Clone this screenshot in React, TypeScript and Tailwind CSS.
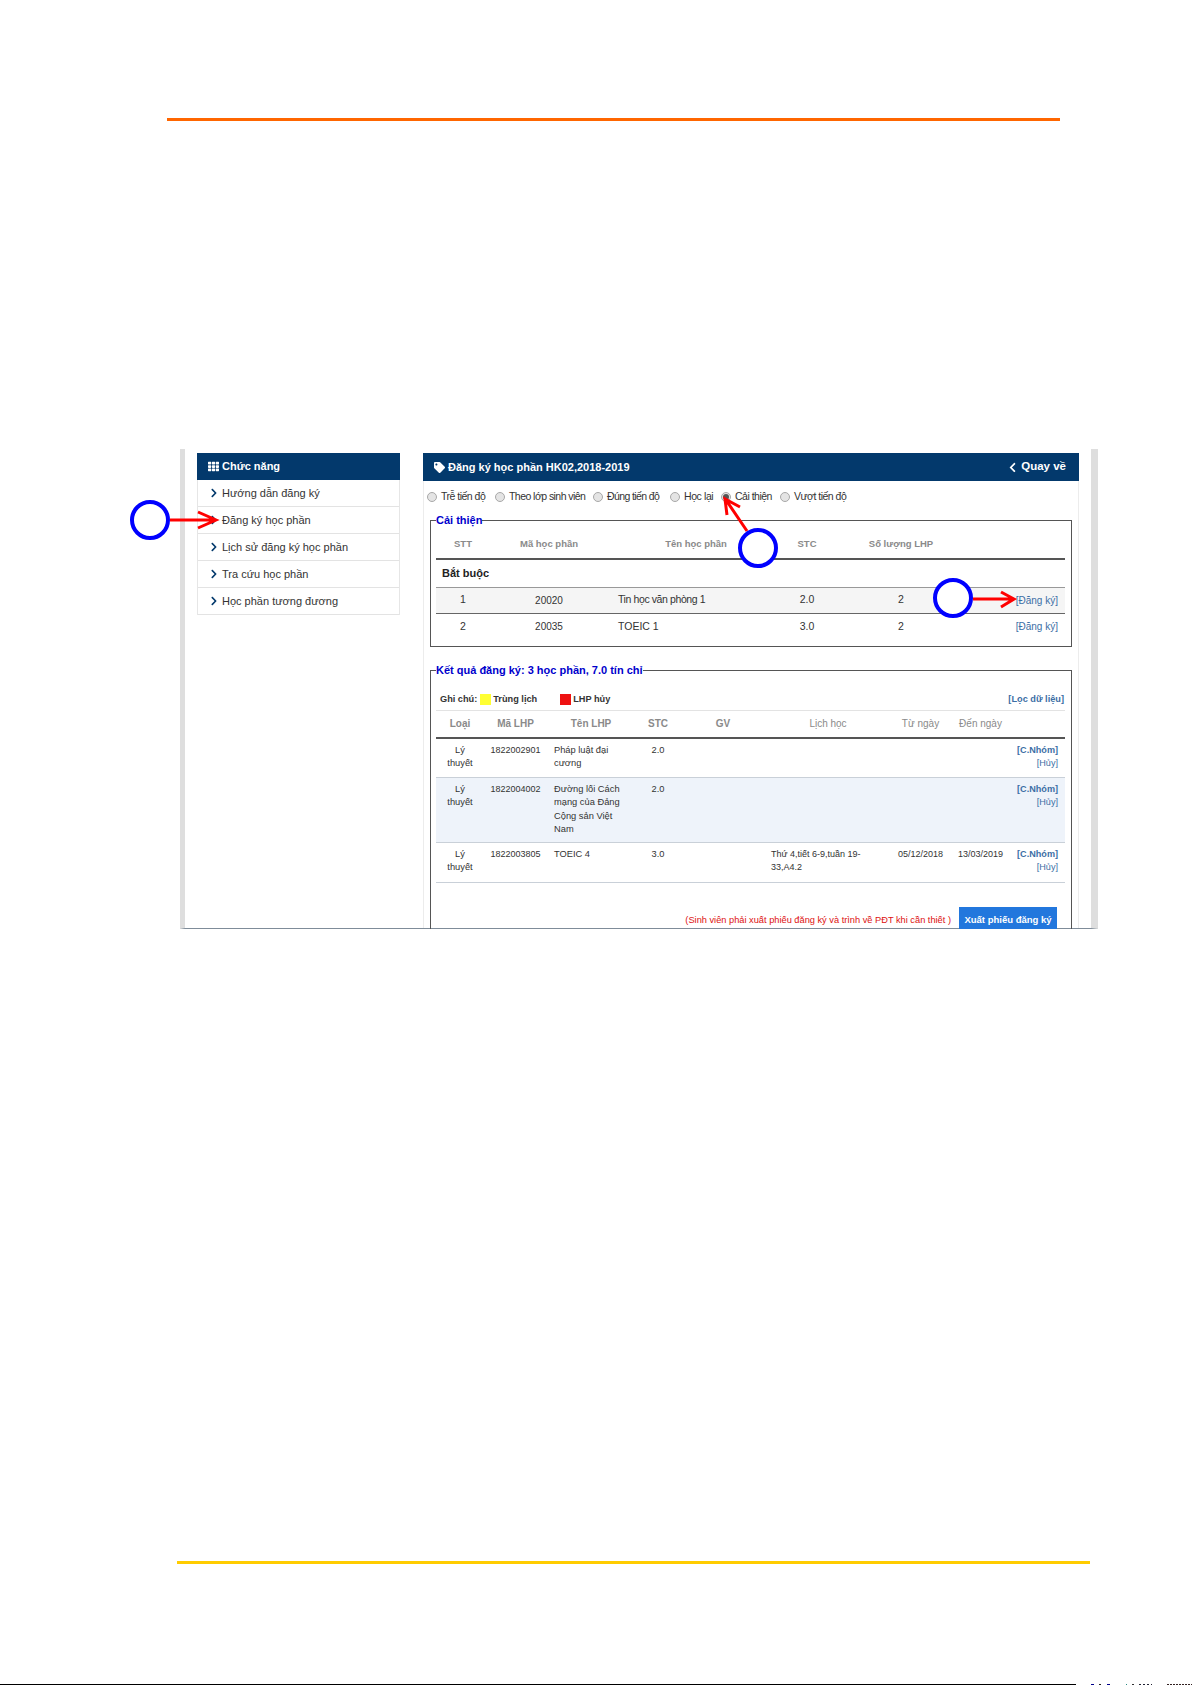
import { FaChevronLeft, FaChevronRight, FaTag, FaTh } from 'react-icons/fa';

const MENU = [
  'Hướng dẫn đăng ký',
  'Đăng ký học phần',
  'Lịch sử đăng ký học phần',
  'Tra cứu học phần',
  'Học phần tương đương',
];

const TRACKS = [
  { label: 'Trễ tiến độ', checked: false, style: 'w-[68px] tracking-[-0.5px]' },
  { label: 'Theo lớp sinh viên', checked: false, style: 'w-[98px] tracking-[-0.55px]' },
  { label: 'Đúng tiến độ', checked: false, style: 'w-[77px] tracking-[-0.6px]' },
  { label: 'Học lại', checked: false, style: 'w-[51px] tracking-[-0.4px]' },
  { label: 'Cải thiện', checked: true, style: 'w-[59px] tracking-[-0.5px]' },
  { label: 'Vượt tiến độ', checked: false, style: 'tracking-[-0.5px]' },
];

const RESULTS = [
  {
    name: 'Pháp luật đại cương',
    code: '1822002901',
    stc: '2.0',
    schedule: '',
    from: '',
    to: '',
    row: 'h-[40px]',
  },
  {
    name: 'Đường lối Cách mạng của Đảng Cộng sản Việt Nam',
    code: '1822004002',
    stc: '2.0',
    schedule: '',
    from: '',
    to: '',
    row: 'h-[65px] bg-[#eef3fa]',
  },
  {
    name: 'TOEIC 4',
    code: '1822003805',
    stc: '3.0',
    schedule: 'Thứ 4,tiết 6-9,tuần 19-33,A4.2',
    from: '05/12/2018',
    to: '13/03/2019',
    row: 'h-[40px]',
  },
];

function Radio({ checked }: { checked: boolean }) {
  return (
    <span className="mr-[4px] flex size-[10px] shrink-0 items-center justify-center rounded-full border border-[#a8a8a8] bg-[#e4e4e4]">
      {checked && <span className="size-[6px] rounded-full bg-[#555]" />}
    </span>
  );
}

function Sidebar() {
  return (
    <aside className="w-[203px] shrink-0">
      <div className="flex h-[27px] items-center gap-[3px] bg-[#03396c] pl-[11px] text-[11px] font-bold text-white">
        <FaTh className="size-[11px]" />
        Chức năng
      </div>
      <ul className="border-x border-[#e6e6e6] text-[#333]">
        {MENU.map((item) => (
          <li
            key={item}
            className="flex h-[27px] items-center gap-[3px] border-b border-[#e3e3e3] pl-[11px] text-[11px]"
          >
            <FaChevronRight className="size-[10px] text-[#03396c]" />
            {item}
          </li>
        ))}
      </ul>
    </aside>
  );
}

function CourseTable() {
  return (
    <table className="mt-[4px] w-[629px] table-fixed border-collapse text-[10.5px] text-[#333]">
      <colgroup>
        <col className="w-[54px]" />
        <col className="w-[118px]" />
        <col className="w-[176px]" />
        <col className="w-[46px]" />
        <col className="w-[142px]" />
        <col className="w-[93px]" />
      </colgroup>
      <thead>
        <tr className="h-[28px] border-b-2 border-[#555] text-center text-[9.5px] font-bold text-[#8a8a8a]">
          <th>STT</th>
          <th>Mã học phần</th>
          <th>Tên học phần</th>
          <th>STC</th>
          <th>Số lượng LHP</th>
          <th />
        </tr>
      </thead>
      <tbody>
        <tr className="h-[28px] border-b border-[#999]">
          <td colSpan={6} className="pl-[6px] text-[11px] font-bold text-[#222]">
            Bắt buộc
          </td>
        </tr>
        <tr className="h-[26px] border-b border-[#666] bg-[#f5f5f5] text-center">
          <td>1</td>
          <td className="text-[10px]">20020</td>
          <td className="pl-[10px] text-left tracking-[-0.4px]">Tin học văn phòng 1</td>
          <td>2.0</td>
          <td>2</td>
          <td className="pr-[7px] text-right text-[10px] text-[#3c6ea5]">[Đăng ký]</td>
        </tr>
        <tr className="h-[27px] text-center">
          <td>2</td>
          <td className="text-[10px]">20035</td>
          <td className="pl-[10px] text-left">TOEIC 1</td>
          <td>3.0</td>
          <td>2</td>
          <td className="pr-[7px] text-right text-[10px] text-[#3c6ea5]">[Đăng ký]</td>
        </tr>
      </tbody>
    </table>
  );
}

function ResultTable() {
  return (
    <table className="w-[629px] table-fixed border-collapse text-[9.3px] leading-[13.3px] text-[#333]">
      <colgroup>
        <col className="w-[48px]" />
        <col className="w-[63px]" />
        <col className="w-[88px]" />
        <col className="w-[46px]" />
        <col className="w-[84px]" />
        <col className="w-[126px]" />
        <col className="w-[59px]" />
        <col className="w-[61px]" />
        <col className="w-[54px]" />
      </colgroup>
      <thead>
        <tr className="h-[27px] border-y border-t-[#e3e3e3] border-b-2 border-b-[#555] text-center text-[10px] font-bold text-[#8a8a8a]">
          <th>Loại</th>
          <th>Mã LHP</th>
          <th>Tên LHP</th>
          <th>STC</th>
          <th>GV</th>
          <th className="font-normal">Lịch học</th>
          <th className="font-normal">Từ ngày</th>
          <th className="font-normal">Đến ngày</th>
          <th />
        </tr>
      </thead>
      <tbody>
        {RESULTS.map((r) => (
          <tr key={r.code} className={`${r.row} border-b border-[#c9d0d8] align-top`}>
            <td className="px-[8px] pt-[5px] text-center">Lý thuyết</td>
            <td className="pt-[5px] text-center text-[9px]">{r.code}</td>
            <td className="pr-[8px] pl-[7px] pt-[5px]">{r.name}</td>
            <td className="pt-[5px] text-center">{r.stc}</td>
            <td />
            <td className="pr-[20px] pl-[6px] pt-[5px] text-[9px]">{r.schedule}</td>
            <td className="pt-[5px] text-center text-[9px]">{r.from}</td>
            <td className="pt-[5px] text-center text-[9px]">{r.to}</td>
            <td className="pr-[7px] pt-[5px] text-right text-[9.1px] text-[#3c6ea5]">
              <div className="font-bold">[C.Nhóm]</div>
              <div>[Hủy]</div>
            </td>
          </tr>
        ))}
      </tbody>
    </table>
  );
}

function MainPanel() {
  return (
    <main className="h-[475px] w-[656px] shrink-0">
      <div className="flex h-[28px] items-center justify-between bg-[#03396c] pr-[13px] pl-[11px] text-[11px] font-bold text-white">
        <span className="flex items-center gap-[3px]">
          <FaTag className="size-[11px]" />
          Đăng ký học phần HK02,2018-2019
        </span>
        <span className="flex items-center gap-[3px] text-[11.5px]">
          <FaChevronLeft className="size-[11px]" />
          Quay về
        </span>
      </div>

      <div className="h-[447px] border-x border-[#ececec]">
        <div className="flex h-[32px] items-center pl-[3px] text-[10.5px] text-[#333]">
          {TRACKS.map((t) => (
            <label key={t.label} className={`flex items-center whitespace-nowrap ${t.style}`}>
              <Radio checked={t.checked} />
              {t.label}
            </label>
          ))}
        </div>

        <fieldset className="mx-[6px] mt-[1px] h-[133px] border border-[#555] pr-[6px] pl-[5px]">
          <legend className="text-[11px] leading-[13px] font-bold text-[#0000cc]">Cải thiện</legend>
          <CourseTable />
        </fieldset>

        <fieldset className="mx-[6px] mt-[17px] h-[265px] overflow-hidden border border-b-0 border-[#555] pr-[6px] pl-[5px]">
          <legend className="text-[11px] leading-[13px] font-bold text-[#0000cc]">
            Kết quả đăng ký: 3 học phần, 7.0 tín chỉ
          </legend>
          <div className="flex h-[33px] items-end justify-between pr-[1px] pb-[5px] pl-[4px] text-[9.2px] leading-[12px] font-bold text-[#333]">
            <span className="flex items-center">
              Ghi chú:
              <span className="mr-[2px] ml-[3px] size-[11px] bg-[#ffff33]" />
              Trùng lịch
              <span className="mr-[2px] ml-[23px] size-[11px] bg-[#ee1111]" />
              LHP hủy
            </span>
            <span className="text-[#3c6ea5]">[Lọc dữ liệu]</span>
          </div>
          <ResultTable />
          <div className="mt-[24px] flex items-start justify-end pr-[8px]">
            <span className="mt-[7px] mr-[8px] text-[9.25px] leading-[12px] text-[#dd1111]">
              (Sinh viên phải xuất phiếu đăng ký và trình về PĐT khi cần thiết )
            </span>
            <button
              type="button"
              className="h-[26px] w-[98px] bg-[#2277dd] text-[9.5px] font-bold whitespace-nowrap text-white"
            >
              Xuất phiếu đăng ký
            </button>
          </div>
        </fieldset>
      </div>
    </main>
  );
}

export default function App() {
  return (
    <div className="relative flex h-[1685px] w-[1192px] flex-col overflow-hidden bg-white font-['Liberation_Sans',Arial,sans-serif]">
      <div className="mt-[118px] ml-[167px] h-[3px] w-[893px] bg-[#ff6600]" />

      <section className="mt-[328px] ml-[180px] flex h-[480px] w-[918px] shrink-0 gap-[23px] border-b border-b-[#7f8c99] border-l-[5px] border-r-[7px] border-x-[#dedede] pt-[4px] pl-[12px]">
        <Sidebar />
        <MainPanel />
      </section>

      <div className="mt-[632px] ml-[177px] h-[3px] w-[913px] bg-[#ffcc00]" />

      {/* bottom edge of the scanned page */}
      <div className="mt-auto flex h-[1px] w-full">
        <div className="h-full w-[1077px] bg-black" />
        <div className="ml-[15px] h-full w-[3px] bg-[#00008b]" />
        <div className="ml-[5px] h-full w-[2px] bg-[#222]" />
        <div className="ml-[6px] h-full w-[3px] bg-[#00008b]" />
        <div className="ml-[16px] h-full w-[1px] bg-[#2a8a80]" />
        <div className="ml-[5px] h-full w-[2px] bg-[#333]" />
        <div className="ml-[5px] h-full w-[13px] bg-[repeating-linear-gradient(90deg,#223_0_2px,transparent_2px_4px)]" />
        <div className="ml-[15px] h-full w-[25px] bg-[repeating-linear-gradient(90deg,#322_0_2px,transparent_2px_3px)]" />
      </div>

      {/* annotations drawn over the screenshot */}
      <svg className="pointer-events-none absolute inset-0" width="1192" height="1685" fill="none">
        <g stroke="#ff0000" strokeWidth="3">
          <path d="M170 520H216M198 512l18 8-18 8" />
          <path d="M747 531L726 500M727 515L725 499L740 507" />
          <path d="M973 599H1014M1001 592l13 7-13 8" />
        </g>
        <g stroke="#0000ff" strokeWidth="4" fill="#fff">
          <circle cx="150" cy="520" r="18" />
          <circle cx="758" cy="548" r="18" />
          <circle cx="953" cy="598" r="18" />
        </g>
      </svg>
    </div>
  );
}
